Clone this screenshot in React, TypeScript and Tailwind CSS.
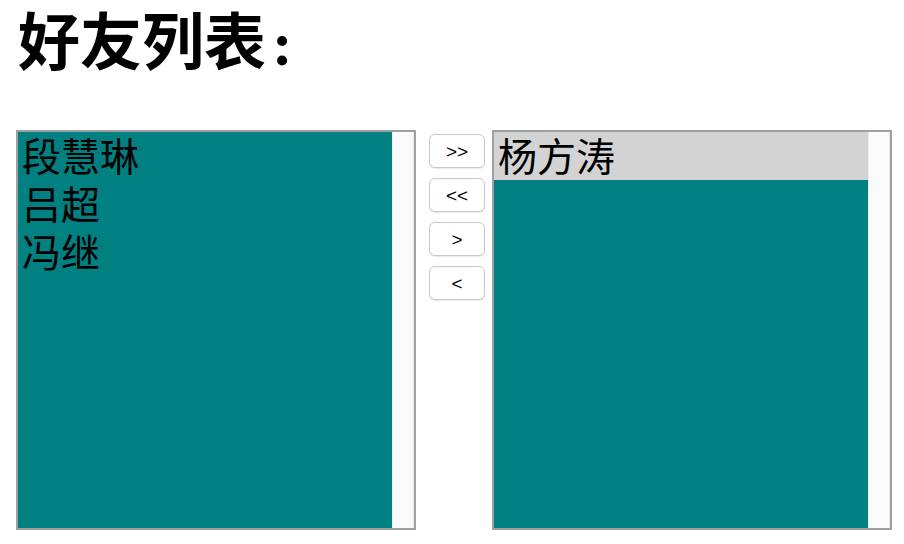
const LEFT = ["段慧琳", "吕超", "冯继"];
const RIGHT = ["杨方涛"];

function ListBox({ items, selected = -1 }: { items: string[]; selected?: number }) {
  return (
    <div className="flex h-[400px] w-[400px] shrink-0 border-2 border-[#a0a0a0] bg-white">
      <div className="flex-1 bg-[#008080]">
        {items.map((name, i) => (
          <div
            key={name}
            className={
              "h-[48px] pl-[4px] text-[39px] leading-[44px] text-black " +
              (i === selected ? "bg-[#d3d3d3]" : "")
            }
          >
            {name}
          </div>
        ))}
      </div>
      <div className="w-[22px] border-l border-r border-[#ececec] bg-[#fafafa]" />
    </div>
  );
}

function MoveButton({ label }: { label: string }) {
  return (
    <button
      className="h-[34px] w-[56px] rounded-[6px] border border-[#c8c8c8] bg-white text-[19px] leading-none text-black shadow-[0_1px_1px_rgba(0,0,0,0.08)]"
      style={{ fontFamily: '"Liberation Sans", sans-serif' }}
    >
      {label}
    </button>
  );
}

export default function App() {
  return (
    <div
      className="min-h-[544px] bg-white px-[16px]"
      style={{ fontFamily: '"Noto Sans CJK SC", "Noto Sans", sans-serif' }}
    >
      <h1
        className="h-[130px] pt-[4px] pl-[2px] text-[62px] font-semibold leading-[80px] text-black"
        style={{ fontFamily: '"Liberation Serif", "Noto Sans CJK SC", serif' }}
      >
        好友列表<span className="ml-[6px] font-bold">:</span>
      </h1>
      <div className="flex items-start">
        <ListBox items={LEFT} />
        <div className="ml-[13px] mt-[4px] flex shrink-0 flex-col gap-[10px]">
          <MoveButton label=">>" />
          <MoveButton label="<<" />
          <MoveButton label=">" />
          <MoveButton label="<" />
        </div>
        <div className="ml-[7px] shrink-0">
          <ListBox items={RIGHT} selected={0} />
        </div>
      </div>
    </div>
  );
}
